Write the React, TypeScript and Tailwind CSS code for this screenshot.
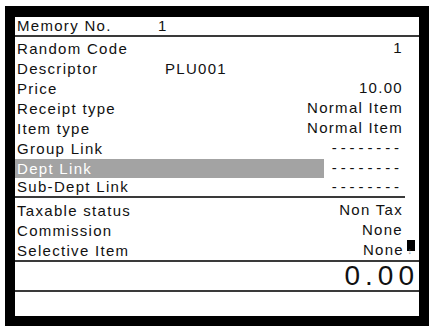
import React from "react";

type Row = { label: string; value?: string; left?: string; highlight?: boolean; cursor?: boolean };

const top: Row[] = [
  { label: "Random Code", value: "1" },
  { label: "Descriptor", left: "PLU001" },
  { label: "Price", value: "10.00" },
  { label: "Receipt type", value: "Normal Item" },
  { label: "Item type", value: "Normal Item" },
  { label: "Group Link", value: "--------" },
  { label: "Dept Link", value: "--------", highlight: true },
];

const bottom: Row[] = [
  { label: "Taxable status", value: "Non Tax" },
  { label: "Commission", value: "None" },
  { label: "Selective Item", value: "None", cursor: true },
];

function Line({ label, value, left, highlight, cursor }: Row) {
  return (
    <div className="flex h-[20px] items-center whitespace-nowrap leading-[20px]">
      <div
        className={`flex h-[19px] shrink-0 items-center self-end pl-[2px] ${
          highlight ? "w-[309px] bg-[#a3a3a3] text-white" : "min-w-[160px]"
        }`}
      >
        <span className="w-[148px] shrink-0">{label}</span>
        {left && <span className="shrink-0">{left}</span>}
      </div>
      <div className="flex flex-1 justify-end pr-[16px]">
        <span className={value && value.startsWith("-") ? "tracking-[3.9px]" : ""}>{value}</span>
        {cursor && (
          <span className="-mr-[12px] ml-[2px] flex w-[9px] flex-col items-center">
            <span className="block h-[11px] w-[8px] bg-black" />
            <span className="-mt-[4px] text-[9px] leading-[9px] text-[#888]">↓</span>
          </span>
        )}
      </div>
    </div>
  );
}

export default function App() {
  return (
    <div className="min-h-screen bg-white pl-[5px] pt-[6px]">
      <div className="h-[320px] w-[424px] bg-black pb-[10px] pl-[10px] pr-[10px] pt-[11px]">
        <div
          className="flex h-full flex-col bg-white text-[15px] tracking-[1.3px] text-[#111]"
          style={{ fontFamily: '"Liberation Sans", Arial, sans-serif' }}
        >
          <div className="flex h-[18px] items-center pl-[2px] leading-[18px]">
            <span className="w-[141px]">Memory No.</span>
            <span>1</span>
          </div>
          <div className="h-[2px] bg-[#3a3a3a]" />
          <div className="h-[1px]" />
          {top.map((r) => (
            <Line key={r.label} {...r} />
          ))}
          <div className="flex h-[18px] items-center whitespace-nowrap leading-[18px]">
            <span className="w-[160px] pl-[2px]">Sub-Dept Link</span>
            <div className="flex flex-1 justify-end pr-[16px]">
              <span className="tracking-[3.9px]">--------</span>
            </div>
          </div>
          <div className="mr-[14px] h-[2px] bg-[#3a3a3a]" />
          <div className="h-[2px]" />
          {bottom.map((r) => (
            <Line key={r.label} {...r} />
          ))}
          <div className="h-[2px] bg-[#3a3a3a]" />
          <div className="flex h-[28px] items-center justify-end text-[28px] leading-[28px] tracking-[5px]">
            0.00
          </div>
          <div className="h-[2px] bg-[#3a3a3a]" />
          <div className="flex-1" />
        </div>
      </div>
    </div>
  );
}
